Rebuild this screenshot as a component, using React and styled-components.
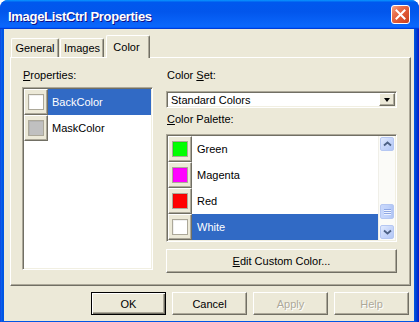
import React from 'react';
import styled, { createGlobalStyle } from 'styled-components';

const Global = createGlobalStyle`
  html, body { margin: 0; padding: 0; background: #ffffff; }
  body { font-family: "Liberation Sans", Arial, sans-serif; font-size: 11px; color: #000; }
  * { box-sizing: border-box; }
`;

const Window = styled.div`
  width: 419px;
  height: 322px;
  display: flex;
  flex-direction: column;
  border-radius: 8px 8px 0 0;
  overflow: hidden;
  background: linear-gradient(to right, #0831d9 0, #166aee 1px, #0055e5 2px, #0055e5 414px, #0046d0 416px, #0019cf 419px);
`;

const TitleBar = styled.div`
  height: 29px;
  flex: none;
  display: flex;
  align-items: center;
  justify-content: space-between;
  padding: 0 9px 0 8px;
  background: linear-gradient(180deg, #0997ff, #0058ee 8%, #0256ec 40%, #0a66fb 88%, #0a66fb 93%, #005bff 95%, #003dd7 96%, #003dd7);
`;

const TitleText = styled.div`
  margin-top: 4px;
  color: #fff;
  font-family: "Liberation Sans", Arial, sans-serif;
  font-weight: bold;
  font-size: 13px;
  letter-spacing: -0.3px;
  text-shadow: 1px 1px #0f1089;
`;

const CloseButton = styled.div`
  width: 19px;
  height: 19px;
  border: 1px solid #fff;
  border-radius: 3px;
  display: flex;
  align-items: center;
  justify-content: center;
  background: linear-gradient(135deg, #f4a789 0%, #e8714e 30%, #de5632 60%, #c83e1d 100%);
`;

const Client = styled.div`
  flex: 1;
  margin: 0 5px 4px 4px;
  background: #ece9d8;
  padding: 6px 3px 6px 6px;
  display: flex;
  flex-direction: column;
`;

const TabStrip = styled.div`
  height: 22px;
  flex: none;
  display: flex;
  align-items: flex-end;
  padding-left: 1px;
`;

const Tab = styled.div`
  position: relative;
  z-index: ${p => (p.$active ? 1 : 0)};
  width: ${p => p.$w}px;
  margin-left: ${p => p.$gap}px;
  height: ${p => (p.$active ? 23 : 19)}px;
  margin-bottom: ${p => (p.$active ? -1 : 0)}px;
  display: flex;
  align-items: center;
  justify-content: center;
  padding-right: ${p => (p.$active ? 3 : 0)}px;
  padding-bottom: ${p => (p.$active ? 1 : 0)}px;
  background: #ece9d8;
  border-top: 1px solid #fff;
  border-left: 1px solid #fff;
  border-right: 1px solid #716f64;
  box-shadow: inset -1px 0 #aca899;
  border-radius: 2px 2px 0 0;
`;

const Panel = styled.div`
  flex: 1;
  display: flex;
  gap: 13px;
  padding: 11px 13px 12px 11px;
  border-top: 1px solid #fff;
  border-left: 1px solid #fff;
  border-right: 1px solid #716f64;
  border-bottom: 1px solid #716f64;
  box-shadow: inset -1px -1px #aca899;
`;

const Column = styled.div`
  width: ${p => p.$w}px;
  display: flex;
  flex-direction: column;
`;

const Label = styled.div`
  height: 13px;
  line-height: 13px;
  margin-top: ${p => p.$mt || 0}px;
  padding-left: 1px;
  white-space: nowrap;
`;

const ListBox = styled.div`
  margin-top: ${p => p.$mt}px;
  height: ${p => p.$h}px;
  flex: none;
  display: flex;
  background: #fff;
  border: 1px solid;
  border-color: #aca899 #fff #fff #aca899;
  box-shadow: inset 1px 1px #716f64, inset -1px -1px #f1efe2;
  padding: 1px;
  overflow: hidden;
`;

const Rows = styled.div`
  flex: 1;
  display: flex;
  flex-direction: column;
`;

const Row = styled.div`
  height: 26px;
  flex: none;
  display: flex;
`;

const SwatchCell = styled.div`
  width: 24px;
  flex: none;
  display: flex;
  align-items: center;
  justify-content: center;
  background: #ece9d8;
  border-top: 1px solid #fff;
  border-left: 1px solid #fff;
  border-right: 1px solid #716f64;
  border-bottom: 1px solid #716f64;
  box-shadow: inset -1px -1px #aca899;
`;

const CellFill = styled.div`
  width: 24px;
  flex: 1;
  background: #ece9d8;
  border-left: 1px solid #fff;
  border-right: 1px solid #716f64;
`;

const Swatch = styled.div`
  width: 16px;
  height: 16px;
  margin: 0 1px 1px 0;
  background: ${p => p.$color};
  border: 1px solid #aca899;
  box-shadow: inset 1px 1px rgba(0,0,0,0.06);
`;

const RowText = styled.div`
  flex: 1;
  display: flex;
  align-items: center;
  padding-left: ${p => p.$pl}px;
  background: ${p => (p.$selected ? '#316ac5' : '#fff')};
  color: ${p => (p.$selected ? '#fff' : '#000')};
`;

const ScrollBar = styled.div`
  width: 17px;
  flex: none;
  display: flex;
  flex-direction: column;
  padding: 1px;
  background: #fbfbf8;
  border-left: 1px solid #f0efe8;
`;

const ScrollButton = styled.div`
  height: 14px;
  flex: none;
  display: flex;
  align-items: center;
  justify-content: center;
  border: 1px solid #b5c7f2;
  border-radius: 2px;
  background: linear-gradient(135deg, #e2ebfe 0%, #c7d6fa 50%, #b4c8f6 100%);
`;

const ScrollTrack = styled.div`
  flex: 1;
  display: flex;
  flex-direction: column;
  justify-content: flex-end;
  padding-bottom: 6px;
`;

const Thumb = styled.div`
  height: 15px;
  display: flex;
  flex-direction: column;
  align-items: center;
  justify-content: center;
  gap: 1px;
  border: 1px solid #b5c7f2;
  border-radius: 2px;
  background: linear-gradient(90deg, #c9d8fb 0%, #bfd1fa 60%, #b0c5f4 100%);
`;

const Grip = styled.div`
  width: 7px;
  height: 1px;
  background: #8ea7e4;
  box-shadow: 0 1px #eef3fe;
`;

const Combo = styled.div`
  margin-top: 9px;
  height: 17px;
  flex: none;
  display: flex;
  background: #fff;
  border: 1px solid;
  border-color: #aca899 #fff #fff #aca899;
  box-shadow: inset 1px 1px #716f64, inset -1px -1px #f1efe2;
  padding: 1px;
`;

const ComboText = styled.div`
  flex: 1;
  display: flex;
  align-items: center;
  padding-left: 3px;
`;

const ComboArrow = styled.div`
  width: 16px;
  flex: none;
  display: flex;
  align-items: center;
  justify-content: center;
  background: #ece9d8;
  border: 1px solid;
  border-color: #fff #716f64 #716f64 #fff;
  box-shadow: inset -1px -1px #aca899;
  &::after {
    content: "";
    width: 0;
    height: 0;
    border-left: 3.5px solid transparent;
    border-right: 3.5px solid transparent;
    border-top: 4px solid #000;
    margin: 1px 1px 0 0;
  }
`;

const Button = styled.button`
  width: ${p => (p.$wide ? '100%' : '75px')};
  height: ${p => p.$h || 23}px;
  margin-top: ${p => p.$mt || 0}px;
  flex: none;
  padding: 0;
  font-family: "Liberation Sans", Arial, sans-serif;
  font-size: 11px;
  background: #ece9d8;
  color: ${p => (p.disabled ? '#aca899' : '#000')};
  text-shadow: ${p => (p.disabled ? '1px 1px #fff' : 'none')};
  border: 1px solid;
  border-color: ${p => (p.$default ? '#000' : '#fff #716f64 #716f64 #fff')};
  box-shadow: ${p =>
    p.$default
      ? 'inset 1px 1px #fff, inset -1px -1px #716f64, inset -2px -2px #aca899'
      : 'inset -1px -1px #aca899'};
`;

const ButtonRow = styled.div`
  flex: none;
  display: flex;
  justify-content: flex-end;
  gap: 6px;
  margin-top: 6px;
  padding-right: 2px;
`;

const Chevron = ({ down }) => (
  <svg width="9" height="6" viewBox="0 0 9 6">
    <path
      d={down ? 'M1 1.5 L4.5 4.5 L8 1.5' : 'M1 4.5 L4.5 1.5 L8 4.5'}
      fill="none"
      stroke="#4d6185"
      strokeWidth="1.8"
    />
  </svg>
);

const props = [
  { name: 'BackColor', color: '#ffffff', selected: true },
  { name: 'MaskColor', color: '#c0c0c0' },
];

const palette = [
  { name: 'Green', color: '#00ff00' },
  { name: 'Magenta', color: '#ff00ff' },
  { name: 'Red', color: '#ff0000' },
  { name: 'White', color: '#ffffff', selected: true },
];

export default function App() {
  return (
    <>
      <Global />
      <Window>
        <TitleBar>
          <TitleText>ImageListCtrl Properties</TitleText>
          <CloseButton>
            <svg width="11" height="11" viewBox="0 0 11 11">
              <path d="M1.5 1.5 L9.5 9.5 M9.5 1.5 L1.5 9.5" stroke="#fff" strokeWidth="2" strokeLinecap="square" />
            </svg>
          </CloseButton>
        </TitleBar>
        <Client>
          <TabStrip>
            <Tab $w={48} $gap={0}>General</Tab>
            <Tab $w={44} $gap={1}>Images</Tab>
            <Tab $w={44} $gap={2} $active>Color</Tab>
          </TabStrip>
          <Panel>
            <Column $w={131}>
              <Label><u>P</u>roperties:</Label>
              <ListBox $mt={5} $h={183}>
                <Rows>
                  {props.map(p => (
                    <Row key={p.name}>
                      <SwatchCell><Swatch $color={p.color} /></SwatchCell>
                      <RowText $pl={4} $selected={p.selected}>{p.name}</RowText>
                    </Row>
                  ))}
                </Rows>
              </ListBox>
            </Column>
            <Column $w={231}>
              <Label>Color <u>S</u>et:</Label>
              <Combo>
                <ComboText>Standard Colors</ComboText>
                <ComboArrow />
              </Combo>
              <Label $mt={5}><u>C</u>olor Palette:</Label>
              <ListBox $mt={8} $h={108}>
                <Rows>
                  {palette.map(p => (
                    <Row key={p.name}>
                      <SwatchCell><Swatch $color={p.color} /></SwatchCell>
                      <RowText $pl={5} $selected={p.selected}>{p.name}</RowText>
                    </Row>
                  ))}
                  <CellFill />
                </Rows>
                <ScrollBar>
                  <ScrollButton><Chevron /></ScrollButton>
                  <ScrollTrack>
                    <Thumb><Grip /><Grip /><Grip /></Thumb>
                  </ScrollTrack>
                  <ScrollButton><Chevron down /></ScrollButton>
                </ScrollBar>
              </ListBox>
              <Button $wide $h={24} $mt={7}><u>E</u>dit Custom Color...</Button>
            </Column>
          </Panel>
          <ButtonRow>
            <Button $default>OK</Button>
            <Button>Cancel</Button>
            <Button disabled>Apply</Button>
            <Button disabled>Help</Button>
          </ButtonRow>
        </Client>
      </Window>
    </>
  );
}
